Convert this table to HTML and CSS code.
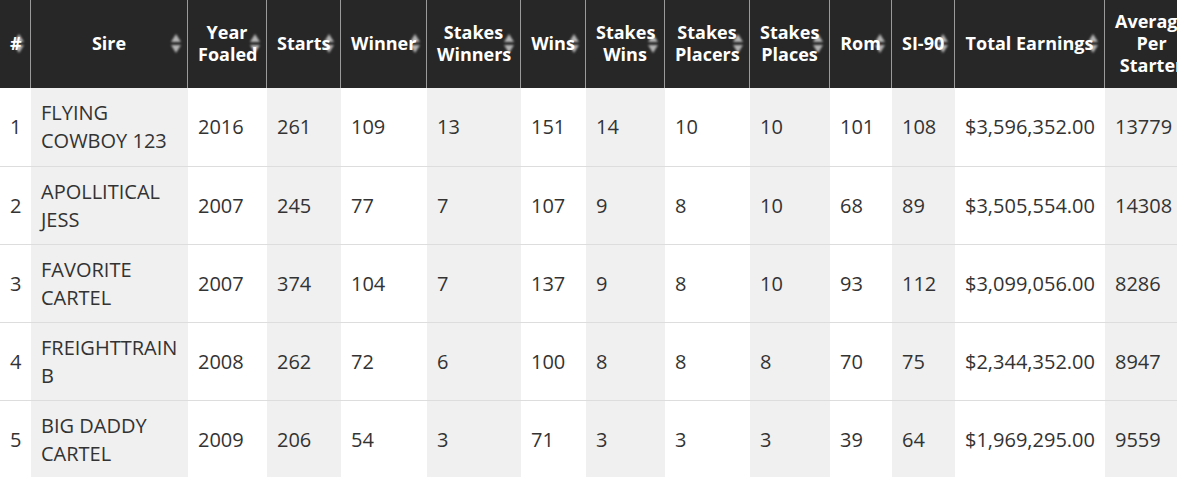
FILE: index.html
```html
<!DOCTYPE html>
<html lang="en">
<head>
<meta charset="utf-8">
<title>Sires</title>
<link rel="stylesheet" href="styles.css">
</head>
<body>
<div class="wrap">
<table class="sires">
  <colgroup>
    <col class="c-num"><col class="c-sire"><col class="c-year"><col class="c-starts"><col class="c-winner"><col class="c-swinners"><col class="c-wins"><col class="c-swins"><col class="c-splacers"><col class="c-splaces"><col class="c-rom"><col class="c-si"><col class="c-total"><col class="c-avg">
  </colgroup>
  <thead>
    <tr>
      <th>#</th>
      <th>Sire</th>
      <th>Year Foaled</th>
      <th>Starts</th>
      <th>Winner</th>
      <th>Stakes Winners</th>
      <th>Wins</th>
      <th>Stakes Wins</th>
      <th>Stakes Placers</th>
      <th>Stakes Places</th>
      <th>Rom</th>
      <th class="nowrap">SI-90</th>
      <th>Total Earnings</th>
      <th>Average Per Starter</th>
    </tr>
  </thead>
  <tbody>
    <tr><td>1</td><td>FLYING COWBOY 123</td><td>2016</td><td>261</td><td>109</td><td>13</td><td>151</td><td>14</td><td>10</td><td>10</td><td>101</td><td>108</td><td>$3,596,352.00</td><td>13779</td></tr>
    <tr><td>2</td><td>APOLLITICAL JESS</td><td>2007</td><td>245</td><td>77</td><td>7</td><td>107</td><td>9</td><td>8</td><td>10</td><td>68</td><td>89</td><td>$3,505,554.00</td><td>14308</td></tr>
    <tr><td>3</td><td>FAVORITE CARTEL</td><td>2007</td><td>374</td><td>104</td><td>7</td><td>137</td><td>9</td><td>8</td><td>10</td><td>93</td><td>112</td><td>$3,099,056.00</td><td>8286</td></tr>
    <tr><td>4</td><td>FREIGHTTRAIN B</td><td>2008</td><td>262</td><td>72</td><td>6</td><td>100</td><td>8</td><td>8</td><td>8</td><td>70</td><td>75</td><td>$2,344,352.00</td><td>8947</td></tr>
    <tr><td>5</td><td>BIG DADDY CARTEL</td><td>2009</td><td>206</td><td>54</td><td>3</td><td>71</td><td>3</td><td>3</td><td>3</td><td>39</td><td>64</td><td>$1,969,295.00</td><td>9559</td></tr>
  </tbody>
</table>
</div>
</body>
</html>
```
FILE: styles.css
```css
html, body {
  margin: 0;
  padding: 0;
  overflow: hidden;
  background: #ffffff;
}

.wrap {
  width: 1177px;
  overflow: hidden;
}

.sires {
  border-collapse: separate;
  border-spacing: 0;
  table-layout: fixed;
  width: 1199px;
  font-family: "Open Sans", "Liberation Sans", sans-serif;
}

.c-num { width: 31px; }
.c-sire { width: 157px; }
.c-year { width: 79px; }
.c-starts { width: 74px; }
.c-winner { width: 86px; }
.c-swinners { width: 94px; }
.c-wins { width: 65px; }
.c-swins { width: 79px; }
.c-splacers { width: 85px; }
.c-splaces { width: 80px; }
.c-rom { width: 62px; }
.c-si { width: 63px; }
.c-total { width: 150px; }
.c-avg { width: 94px; }

.sires thead tr {
  height: 88px;
}

.sires th {
  position: relative;
  z-index: 0;
  background: #272727;
  color: #ffffff;
  font-size: 18px;
  font-weight: 700;
  line-height: 21.7px;
  text-align: center;
  vertical-align: middle;
  padding: 0 10px;
  border-right: 1px solid #9a9a9a;
}

.sires th.nowrap {
  white-space: nowrap;
}

.sires th::before,
.sires th::after {
  content: "";
  position: absolute;
  right: 6px;
  width: 0;
  height: 0;
  border-left: 5px solid transparent;
  border-right: 5px solid transparent;
  z-index: -1;
  filter: blur(0.8px);
}

.sires th::before {
  top: calc(50% - 10px);
  border-bottom: 8px solid #b4b4b4;
}

.sires th::after {
  top: calc(50% + 1px);
  border-top: 8px solid #b4b4b4;
}

.sires td {
  font-size: 20px;
  line-height: 28px;
  color: #333333;
  padding: 11px 10px 10px;
  border-bottom: 1px solid #dddddd;
  vertical-align: middle;
  text-align: left;
  background: #ffffff;
}

.sires tbody tr:first-child td {
  padding-bottom: 11px;
}

.sires td:nth-child(even) {
  background: #f0f0f0;
}
```
